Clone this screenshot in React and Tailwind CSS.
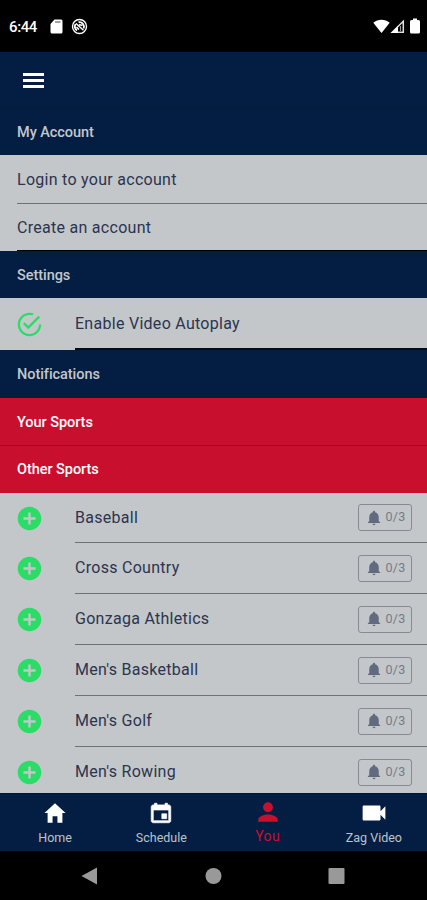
import React from "react";
import {
  IoMdAddCircle,
  IoMdCalendar,
  IoMdCheckmarkCircleOutline,
  IoMdHome,
  IoMdNotifications,
  IoMdPerson,
  IoMdVideocam,
} from "react-icons/io";

const sports = [
  "Baseball",
  "Cross Country",
  "Gonzaga Athletics",
  "Men's Basketball",
  "Men's Golf",
  "Men's Rowing",
];

const tabs = [
  { label: "Home", icon: IoMdHome },
  { label: "Schedule", icon: IoMdCalendar },
  { label: "You", icon: IoMdPerson, active: true },
  { label: "Zag Video", icon: IoMdVideocam },
];

function StatusBar() {
  return (
    <div className="h-[52px] shrink-0 bg-black text-white flex items-center justify-between pl-[9px] pr-[7px]">
      <div className="flex items-center">
        <span className="w-[41px] pt-[2px] text-[15px] font-medium tracking-[-0.4px]">6:44</span>
        <svg width="13" height="15" viewBox="0 0 13 15" fill="currentColor">
          <path d="M4.5 0.5H11a1.5 1.5 0 0 1 1.5 1.5v11a1.5 1.5 0 0 1-1.5 1.5H2A1.5 1.5 0 0 1 .5 13V5z" />
          <path d="M5 3h5.500" stroke="#444" strokeWidth="1" />
        </svg>
        <svg
          className="ml-2"
          width="17"
          height="17"
          viewBox="0 0 17 17"
          fill="none"
          stroke="currentColor"
        >
          <circle cx="8.500" cy="8.500" r="7" strokeWidth="1.400" />
          <path
            d="M6 12.400A4.600 4.600 0 0 1 4.600 6M7.500 4.200A4.600 4.600 0 0 1 12.600 10.500"
            strokeWidth="1.800"
          />
          <path d="M5 5.500l7.500 6.800M8 6.500l3.500 1M5.500 9l2.500 2.500" strokeWidth="1.500" />
        </svg>
      </div>
      <div className="flex items-center">
        <svg width="17" height="15" viewBox="0 0 17 15" fill="currentColor">
          <path d="M8.500 14L.3 3.800C2.600 1.800 5.400.7 8.500.7s5.900 1.100 8.200 3.100z" />
        </svg>
        <svg width="15" height="15" viewBox="0 0 15 15" fill="none">
          <path d="M2.200 13.300H13.300V2.200z" stroke="#ddd" strokeWidth="1.500" />
          <path d="M1 14L8 7v7z" fill="#fff" />
          <path d="M10.500 7v5" stroke="#999" strokeWidth="1" />
        </svg>
        <svg className="ml-[5px]" width="10" height="16" viewBox="0 0 10 16" fill="currentColor">
          <path d="M3 .5h4V2h1.500A1.500 1.500 0 0 1 10 3.500V14a1.500 1.500 0 0 1-1.500 1.500h-7A1.500 1.500 0 0 1 0 14V3.500A1.500 1.500 0 0 1 1.500 2H3z" />
        </svg>
      </div>
    </div>
  );
}

function SectionHeader({ title, className }) {
  return (
    <div
      className={`shrink-0 bg-[#031e42] px-[17px] pt-[2px] flex items-center text-[14.5px] font-medium tracking-[-0.05px] text-[#c3c7cb] ${className}`}
    >
      {title}
    </div>
  );
}

function SportRow({ name }) {
  return (
    <div className="h-[51px] first:h-[50px] shrink-0 flex items-center pl-[15px]">
      <IoMdAddCircle size={29} className="w-[29px] shrink-0 text-[#2bdc67]" />
      <div className="ml-[31px] h-full flex-1 flex items-center justify-between border-b border-[#6d7277] pr-[15px]">
        <span className="tracking-[0.28px]">{name}</span>
        <div className="w-[54px] h-[27px] rounded-[3px] border border-[#858b91] text-[#616a7e] flex items-center justify-center gap-[3px]">
          <IoMdNotifications size={18} />
          <span className="text-[12.5px] tracking-[0.2px] text-[#737b89]">0/3</span>
        </div>
      </div>
    </div>
  );
}

function TabBar() {
  return (
    <div className="h-[58px] shrink-0 bg-[#031e42] grid grid-cols-4 border-t border-[#031431] pl-[2px]">
      {tabs.map(({ label, icon: Icon, active }) => (
        <div
          key={label}
          className={`flex flex-col items-center ${
            active ? "pt-[5px] text-[#c8102e]" : "pt-[6px] text-white"
          }`}
        >
          <Icon size={26} strokeWidth={label === "Schedule" ? 14 : 0} />
          <span
            className={
              active
                ? "text-[14px] leading-[22px] tracking-[0.3px]"
                : "text-[12.5px] leading-[23px] text-[#bcc3cc]"
            }
          >
            {label}
          </span>
        </div>
      ))}
    </div>
  );
}

function App() {
  return (
    <div className="w-[427px] h-[900px] overflow-hidden flex flex-col bg-[#c3c7ca] font-['Roboto',sans-serif] text-[16px] text-[#2c3450]">
      <StatusBar />

      {/* Top bar */}
      <div className="h-[57px] shrink-0 bg-[#031e42] border-b border-[#041c38] flex items-center pl-[23px] text-white">
        <svg width="21" height="15" viewBox="0 0 21 15" fill="currentColor">
          <path d="M0 0h21v3H0zM0 6h21v3H0zM0 12h21v3H0z" />
        </svg>
      </div>

      <SectionHeader title="My Account" className="h-[46px]" />
      <div className="h-[96px] shrink-0 flex flex-col pl-[17px]">
        <div className="h-[49px] pt-[2px] flex items-center border-b border-[#6d7277] tracking-[0.28px]">
          Login to your account
        </div>
        <div className="h-[47px] pt-[1px] flex items-center border-b border-black tracking-[0.28px]">
          Create an account
        </div>
      </div>

      <SectionHeader title="Settings" className="h-[47px]" />
      <div className="h-[52px] shrink-0 flex items-center pl-[15px]">
        <IoMdCheckmarkCircleOutline size={29} className="w-[29px] shrink-0 text-[#2bdc67]" />
        <div className="ml-[31px] h-full pt-[2px] flex-1 flex items-center border-b-2 border-[#020a1c] tracking-[0.28px]">
          Enable Video Autoplay
        </div>
      </div>

      {/* Notification preferences */}
      <SectionHeader title="Notifications" className="h-[48px]" />
      <div className="h-[48px] shrink-0 bg-[#c8102e] border-b border-[#960d27] px-[17px] pt-[2px] flex items-center text-[14.5px] font-medium tracking-[-0.05px] text-white">
        Your Sports
      </div>
      <div className="h-[47px] shrink-0 bg-[#c8102e] px-[17px] pt-[1px] flex items-center text-[14.5px] font-medium tracking-[-0.05px] text-white">
        Other Sports
      </div>
      <div className="h-[300px] shrink-0 overflow-hidden flex flex-col">
        {sports.map((name) => (
          <SportRow key={name} name={name} />
        ))}
      </div>

      <TabBar />

      {/* Android navigation */}
      <div className="flex-1 bg-black flex items-center justify-center text-[#999] pr-[2px]">
        <svg width="264" height="18" viewBox="0 0 264 18" fill="currentColor">
          <path d="M.5 9L16 0.500v17z" />
          <circle cx="132.500" cy="9" r="8" />
          <rect x="247.500" y="1" width="16" height="16" rx="1" />
        </svg>
      </div>
    </div>
  );
}

export default App;
